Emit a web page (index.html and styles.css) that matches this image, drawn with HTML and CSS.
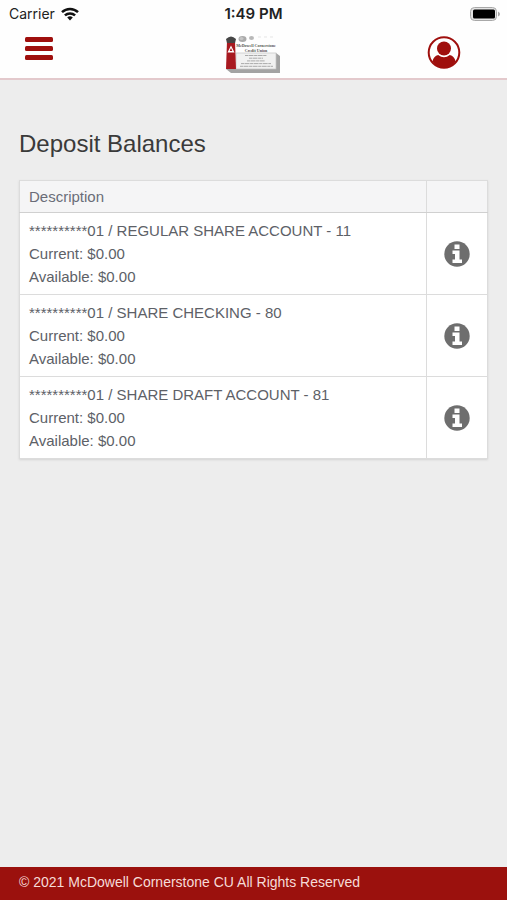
FILE: index.html
```html
<!DOCTYPE html>
<html lang="en">
<head>
<meta charset="utf-8">
<meta name="viewport" content="width=device-width, initial-scale=1">
<title>Deposit Balances</title>
<link rel="stylesheet" href="styles.css">
</head>
<body>
<div class="status">
  <div class="carrier">Carrier
    <svg width="18" height="14" viewBox="0 0 18 14" aria-hidden="true"><g fill="none" stroke="#111" stroke-width="2.5"><path d="M1 5.200C5.500 .9 12.500 .9 17 5.200"/><path d="M3.900 8.400C6.800 5.700 11.200 5.700 14.100 8.400"/></g><path d="M6.200 10.500Q9 8.200 11.800 10.500L9 13.600Z" fill="#111"/></svg>
  </div>
  <div class="clock">1:49 PM</div>
  <div class="battery">
    <svg width="32" height="16" viewBox="0 0 32 16" aria-hidden="true"><rect x="1.500" y="1.500" width="26" height="13" rx="4" fill="#e4e4e4" stroke="#a8a8a8"/><rect x="4" y="3.500" width="22" height="9" rx="1.500" fill="#000"/><path d="M29 5.500Q31 6.500 31 8T29 10.500Z" fill="#aaa"/></svg>
  </div>
</div>
<header class="bar">
  <button class="icon-button" type="button" aria-label="Menu">
    <svg width="28" height="24" viewBox="0 0 28 24" aria-hidden="true"><g fill="#9f0f0d"><rect y="0" width="28" height="5" rx="1.500"/><rect y="9" width="28" height="5" rx="1.500"/><rect y="18" width="28" height="5" rx="1.500"/></g></svg>
  </button>
  <a class="logo" href="#" aria-label="McDowell Cornerstone Credit Union">
    <svg width="64" height="42" viewBox="0 0 64 42" aria-hidden="true">
      <path d="M4 33 9 37H58V20L54 17V33Z" fill="#a3a3a3"/>
      <rect x="14" y="17" width="40" height="16" fill="#f1f1f1" stroke="#c4c4c4" stroke-width=".7"/>
      <path d="M5 5H13L14 33H4Z" fill="#a81920"/>
      <path d="M4 3Q9 -2 14 3L13 7H5Z" fill="#454545"/>
      <path d="M9 9.500 12.500 16.500H5.500Z" fill="#fff"/><path d="M9 12 10.300 15H7.700Z" fill="#a81920"/>
      <ellipse cx="20.500" cy="3" rx="4" ry="3" fill="#aaa"/><ellipse cx="19.500" cy="2.500" rx="2" ry="1.500" fill="#c6c6c6"/>
      <ellipse cx="29.500" cy="2" rx="2.500" ry="2" fill="#b8b8b8"/><path d="M36 1h3M42 1h3M48 1h3" stroke="#e5e5e5"/>
      <text class="logo-name" x="34" y="11" text-anchor="middle">McDowell Cornerstone</text>
      <text class="logo-name" x="34" y="16" text-anchor="middle">Credit Union</text>
      <path d="M23 19.500H45M27 22.200H41M25 24.900H43M19 27.600H49M18 30.300H51" stroke="#aaa" stroke-dasharray="3 .5 5 .6"/>
    </svg>
  </a>
  <button class="icon-button profile" type="button" aria-label="Profile">
    <svg width="34" height="34" viewBox="0 0 34 34" aria-hidden="true"><circle cx="17" cy="16.500" r="15.300" fill="none" stroke="#9f0f0d" stroke-width="2"/><circle cx="17" cy="12.500" r="7" fill="#9f0f0d"/><path d="M5.500 25.500Q6.500 20 11.200 19Q17 23.500 22.800 19Q27.500 20 28.500 25.500Q23.500 32 17 32T5.500 25.500Z" fill="#9f0f0d"/></svg>
  </button>
</header>
<svg class="defs" width="0" height="0" aria-hidden="true"><symbol id="info" viewBox="0 0 26 26"><circle cx="13" cy="13" r="12.700" fill="#6e6e6e"/><path d="M10.500 3.500h5v4.500h-5ZM8.500 9.500h7v9h2.500V22H8.500v-3.500h2.500V13H8.500Z" fill="#fff"/></symbol></svg>
<main class="content">
  <h1>Deposit Balances</h1>
  <table class="balances">
    <thead><tr><th scope="col">Description</th><th class="action" scope="col" aria-label="Details"></th></tr></thead>
    <tbody>
      <tr><td><div>**********01 / REGULAR SHARE ACCOUNT - 11</div><div>Current: $0.00</div><div>Available: $0.00</div></td><td class="action"><button class="icon-button" type="button" aria-label="Details for account 11"><svg width="26" height="26"><use href="#info"/></svg></button></td></tr>
      <tr><td><div>**********01 / SHARE CHECKING - 80</div><div>Current: $0.00</div><div>Available: $0.00</div></td><td class="action"><button class="icon-button" type="button" aria-label="Details for account 80"><svg width="26" height="26"><use href="#info"/></svg></button></td></tr>
      <tr><td><div>**********01 / SHARE DRAFT ACCOUNT - 81</div><div>Current: $0.00</div><div>Available: $0.00</div></td><td class="action"><button class="icon-button" type="button" aria-label="Details for account 81"><svg width="26" height="26"><use href="#info"/></svg></button></td></tr>
    </tbody>
  </table>
</main>
<footer class="footer">© 2021 McDowell Cornerstone CU All Rights Reserved</footer>
</body>
</html>
```
FILE: styles.css
```css
* { box-sizing: border-box; }
body {
  margin: 0;
  min-height: 100vh;
  display: flex;
  flex-direction: column;
  background: #ededed;
  color: #5d6167;
  font: 15px/23px "Liberation Sans", Arial, sans-serif;
}
svg { display: block; }
.defs { position: absolute; }
.status {
  display: grid;
  grid-template-columns: 1fr auto 1fr;
  align-items: center;
  padding: 0 6px;
  height: 27px;
  background: #fefefe;
  color: #222;
  font-family: Inter, sans-serif;
  font-size: 14px;
}
.carrier { display: flex; align-items: center; gap: 6px; padding-left: 3px; }
.clock { font-weight: 600; font-size: 15px; }
.battery { justify-self: end; }
.bar {
  display: grid;
  grid-template-columns: 1fr auto 1fr;
  align-items: start;
  padding: 9px 24px 0;
  height: 53px;
  background: #fefefe;
  border-bottom: 2px solid #e3c9cc;
}
.icon-button {
  display: inline-block;
  padding: 0;
  border: 0;
  background: none;
  cursor: pointer;
}
.bar .icon-button { justify-self: start; padding: 1px; }
.bar .profile { justify-self: end; margin-right: 22px; padding: 0; }
.logo-name { font: bold 4px "Liberation Serif", serif; fill: #555; }
.content { flex: 1; padding: 48px 19px; }
h1 {
  margin: 0 0 20px;
  color: #3a3a3a;
  font-size: 24px;
  font-weight: 400;
  line-height: 32px;
}
.balances {
  width: 100%;
  border-collapse: collapse;
  background: #fff;
  box-shadow: 0 1px 2px #d4d4d4;
}
th, td {
  border: 1px solid #dcdcdc;
  padding: 6px 9px;
  text-align: left;
  font-weight: 400;
}
th {
  padding: 4px 9px;
  background: #f5f5f6;
  color: #6a6d78;
  border-bottom: 1px solid #d0d0d0;
}
.action { width: 61px; padding: 0; text-align: center; }
.action .icon-button { vertical-align: middle; }
.footer {
  padding: 4px 19px 6px;
  background: #9b110d;
  color: #f6dcd8;
  font-size: 14px;
}
```
